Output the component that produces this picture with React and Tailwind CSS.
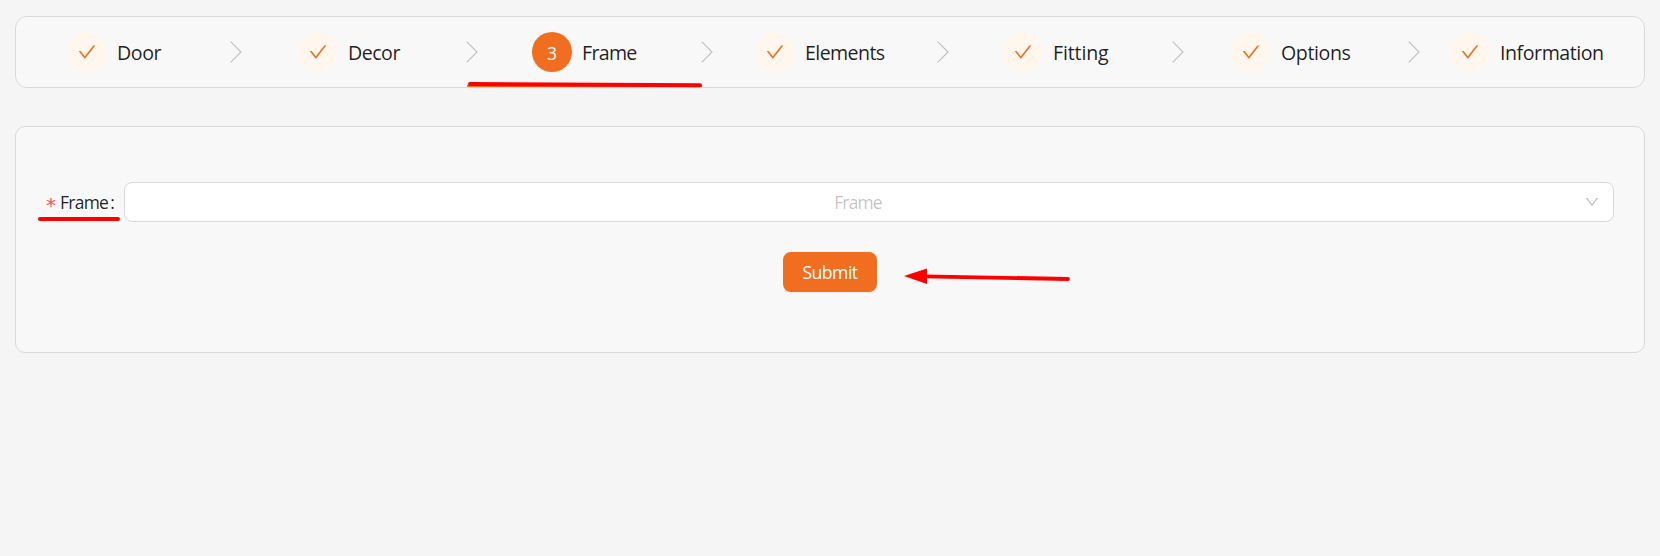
import React from "react";

const steps = [
  { title: "Door", cell: "w-[215px] pl-[51px]", text: "tracking-[-0.4px]" },
  { title: "Decor", cell: "w-[236px] pl-[67px]", text: "tracking-[-0.5px]" },
  { title: "Frame", cell: "w-[235px] pl-[65px]", text: "tracking-[-0.7px]", active: true },
  { title: "Elements", cell: "w-[236px] pl-[53px]", text: "tracking-[-0.6px]" },
  { title: "Fitting", cell: "w-[235px] pl-[65px]", text: "tracking-[-0.15px]" },
  { title: "Options", cell: "w-[236px] pl-[58px]", text: "tracking-[-0.4px]" },
  { title: "Information", cell: "w-[235px] pl-[41px]", text: "tracking-[-0.45px]" },
];

function CheckIcon() {
  return (
    <svg width="18" height="18" viewBox="64 64 896 896" fill="#f16d20" className="block">
      <path d="M912 190h-69.900c-9.800 0-19.100 4.500-25.100 12.200L404.700 724.500 207 474a32 32 0 0 0-25.100-12.200H112c-6.700 0-10.400 7.700-6.300 12.900l273.900 347c12.800 16.200 37.400 16.200 50.300 0l488.400-618.900c4.100-5.100.400-12.800-6.300-12.800z" />
    </svg>
  );
}

function Step({ step, index, last }) {
  return (
    <li className={`relative flex h-[70px] shrink-0 items-center ${step.cell}`}>
      <span
        className={
          step.active
            ? "flex size-10 shrink-0 items-center justify-center rounded-full bg-[#f16d20] text-[17.500px] text-white"
            : "flex size-10 shrink-0 items-center justify-center rounded-full bg-[#fff6ed]"
        }
      >
        {step.active ? <span className="pt-0.5">{index + 1}</span> : <CheckIcon />}
      </span>
      <span className={`pt-[1px] pl-[10px] text-[19.600px] leading-10 whitespace-nowrap text-black/88 ${step.text}`}>
        {step.title}
      </span>
      {!last && (
        <svg className="absolute top-6 -right-[11px]" width="12" height="22" viewBox="0 0 12 22" fill="none">
          <path d="M0.700 0.700L11 11L0.700 21.300" stroke="#bfbfbf" strokeWidth="1.100" />
        </svg>
      )}
      {step.active && <span className="absolute inset-x-0 bottom-0 h-[2px] bg-[#f16d20]" />}
    </li>
  );
}

export default function App() {
  return (
    <div className="relative min-h-[556px] bg-[#f5f5f5] px-[15px] pt-4 font-['Open_Sans','Noto_Sans',sans-serif]">
      <ul className="flex h-[72px] rounded-xl border border-[#d9d9d9] bg-[#f8f8f8]">
        {steps.map((step, i) => (
          <Step key={step.title} step={step} index={i} last={i === steps.length - 1} />
        ))}
      </ul>

      <form
        className="mt-[38px] h-[227px] rounded-[10px] border border-[#d9d9d9] bg-[#f8f8f8] pt-[55px] pr-[30px] pl-[30px]"
        onSubmit={(e) => e.preventDefault()}
      >
        <div className="flex h-10 items-center">
          <label className="flex w-[78px] shrink-0 items-center pt-[1px] text-[17.400px] tracking-[-0.7px] text-black/88">
            <span className="w-[14px] shrink-0 pt-[4px] font-['DejaVu_Sans'] text-[20px] leading-6 font-normal text-[#ff4d4f]">*</span>
            <span>Frame</span>
            <span className="pl-[2px]">:</span>
          </label>
          <div className="flex h-10 flex-1 items-center rounded-lg border border-[#d9d9d9] bg-white pr-[14px] pl-[14px]">
            <span className="flex-1 pt-[1px] pr-[8px] text-center text-[17.400px] tracking-[-0.8px] text-black/25">Frame</span>
            <svg width="14" height="14" viewBox="64 64 896 896" fill="#bfbfbf">
              <path d="M884 256h-75c-5.100 0-9.900 2.500-12.900 6.600L512 654.200 227.900 262.600c-3-4.100-7.800-6.600-12.900-6.600h-75c-6.500 0-10.300 7.400-6.500 12.700l352.600 486.100c12.800 17.600 39 17.600 51.700 0l352.600-486.100c3.900-5.300.100-12.700-6.400-12.700z" />
            </svg>
          </div>
        </div>
        <div className="mt-[30px] flex justify-center">
          <button className="flex h-10 w-[94px] items-center justify-center rounded-lg bg-[#f16d20] text-[17.600px] tracking-[-0.500px] text-white shadow-[0_2px_0_rgba(255,142,5,0.06)]">
            Submit
          </button>
        </div>
      </form>

      <svg className="pointer-events-none absolute top-0 left-0" width="1660" height="556" fill="none">
        <path d="M470 84L700 85.300" stroke="#ff0000" strokeWidth="4" strokeLinecap="round" />
        <path d="M40 219H118" stroke="#ff0000" strokeWidth="4" strokeLinecap="round" />
        <path d="M924 276.300L1068 279" stroke="#ff0000" strokeWidth="3.800" strokeLinecap="round" />
        <path d="M904 276L927 268.500V284Z" fill="#ff0000" />
      </svg>
    </div>
  );
}
